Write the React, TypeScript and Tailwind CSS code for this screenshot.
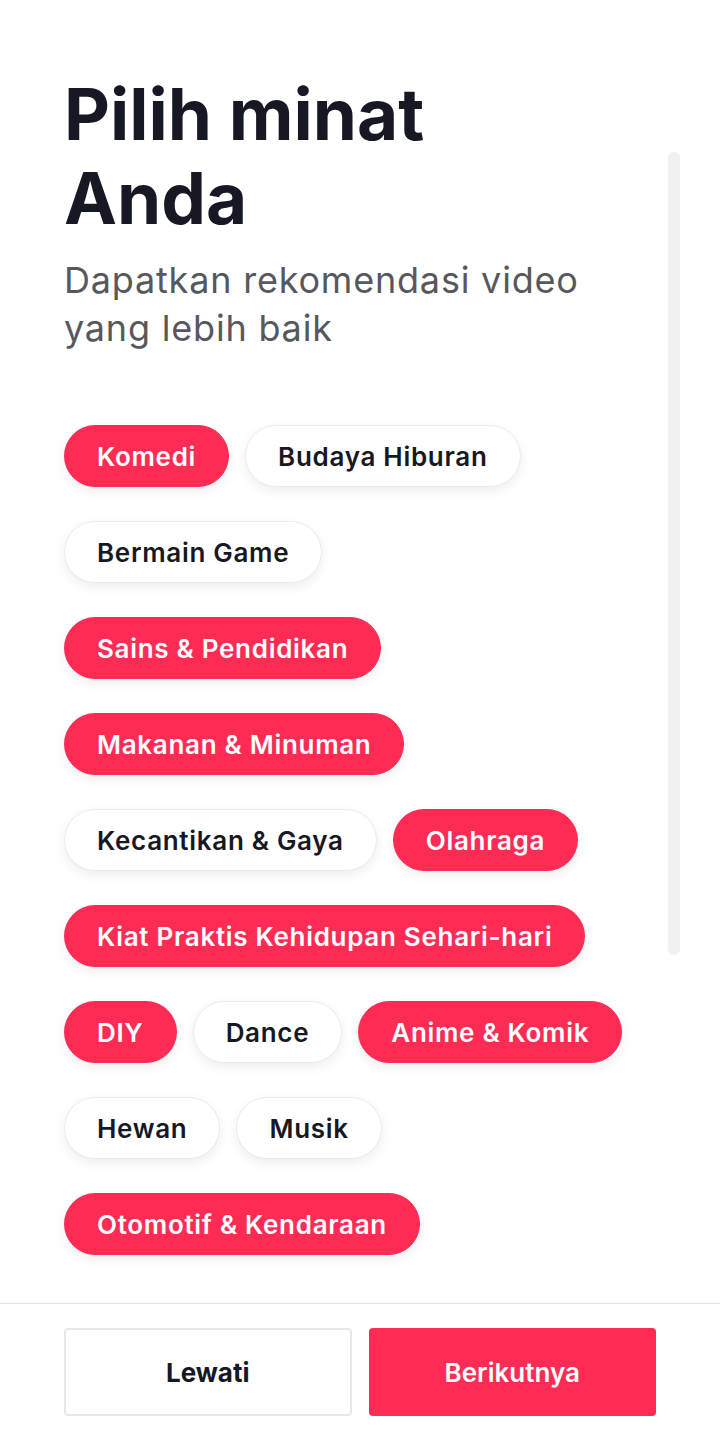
import React from "react";

const rows: { label: string; on: boolean }[][] = [
  [
    { label: "Komedi", on: true },
    { label: "Budaya Hiburan", on: false },
  ],
  [{ label: "Bermain Game", on: false }],
  [{ label: "Sains & Pendidikan", on: true }],
  [{ label: "Makanan & Minuman", on: true }],
  [
    { label: "Kecantikan & Gaya", on: false },
    { label: "Olahraga", on: true },
  ],
  [{ label: "Kiat Praktis Kehidupan Sehari-hari", on: true }],
  [
    { label: "DIY", on: true },
    { label: "Dance", on: false },
    { label: "Anime & Komik", on: true },
  ],
  [
    { label: "Hewan", on: false },
    { label: "Musik", on: false },
  ],
  [{ label: "Otomotif & Kendaraan", on: true }],
];

function Chip({ label, on }: { label: string; on: boolean }) {
  return (
    <div
      className={
        on
          ? "h-[62px] flex items-center px-8 rounded-full bg-[#fe2c55] text-white text-[26px] font-semibold tracking-[0.7px] shadow-[0_4px_12px_rgba(0,0,0,0.07)] border border-[#fe2c55]"
          : "h-[62px] flex items-center px-8 rounded-full bg-white text-[#161823] text-[26px] font-semibold tracking-[0.7px] shadow-[0_4px_12px_rgba(0,0,0,0.07)] border border-[#ebebeb]"
      }
    >
      {label}
    </div>
  );
}

export default function App() {
  return (
    <div
      className="relative w-[720px] h-[1440px] bg-white flex flex-col"
      style={{ fontFamily: "Inter, 'Noto Sans', sans-serif" }}
    >
      <div className="flex-1 px-16 pt-[72px]">
        <h1 className="text-[71px] leading-[84px] font-bold text-[#161823] w-[440px]">
          Pilih minat Anda
        </h1>
        <p className="mt-[16px] w-[560px] text-[36px] leading-[48px] text-[#57585c] font-normal tracking-[0.8px]">
          Dapatkan rekomendasi video yang lebih baik
        </p>
        <div className="mt-[73px] flex flex-col gap-[34px]">
          {rows.map((r, i) => (
            <div key={i} className="flex gap-4">
              {r.map((c) => (
                <Chip key={c.label} label={c.label} on={c.on} />
              ))}
            </div>
          ))}
        </div>
      </div>
      <div className="border-t border-[#e3e3e4] h-[137px] px-16 pt-[24px] flex gap-[17px]">
        <button className="w-[288px] h-[88px] rounded-[4px] border-2 border-[#e8e8e8] bg-white text-[#161823] text-[26px] font-bold">
          Lewati
        </button>
        <button className="w-[288px] h-[88px] rounded-[4px] bg-[#fe2c55] text-white text-[26px] font-semibold">
          Berikutnya
        </button>
      </div>
      <div className="absolute left-[668px] top-[152px] w-[12px] h-[803px] rounded-full bg-[#f1f1f2]" />
    </div>
  );
}
